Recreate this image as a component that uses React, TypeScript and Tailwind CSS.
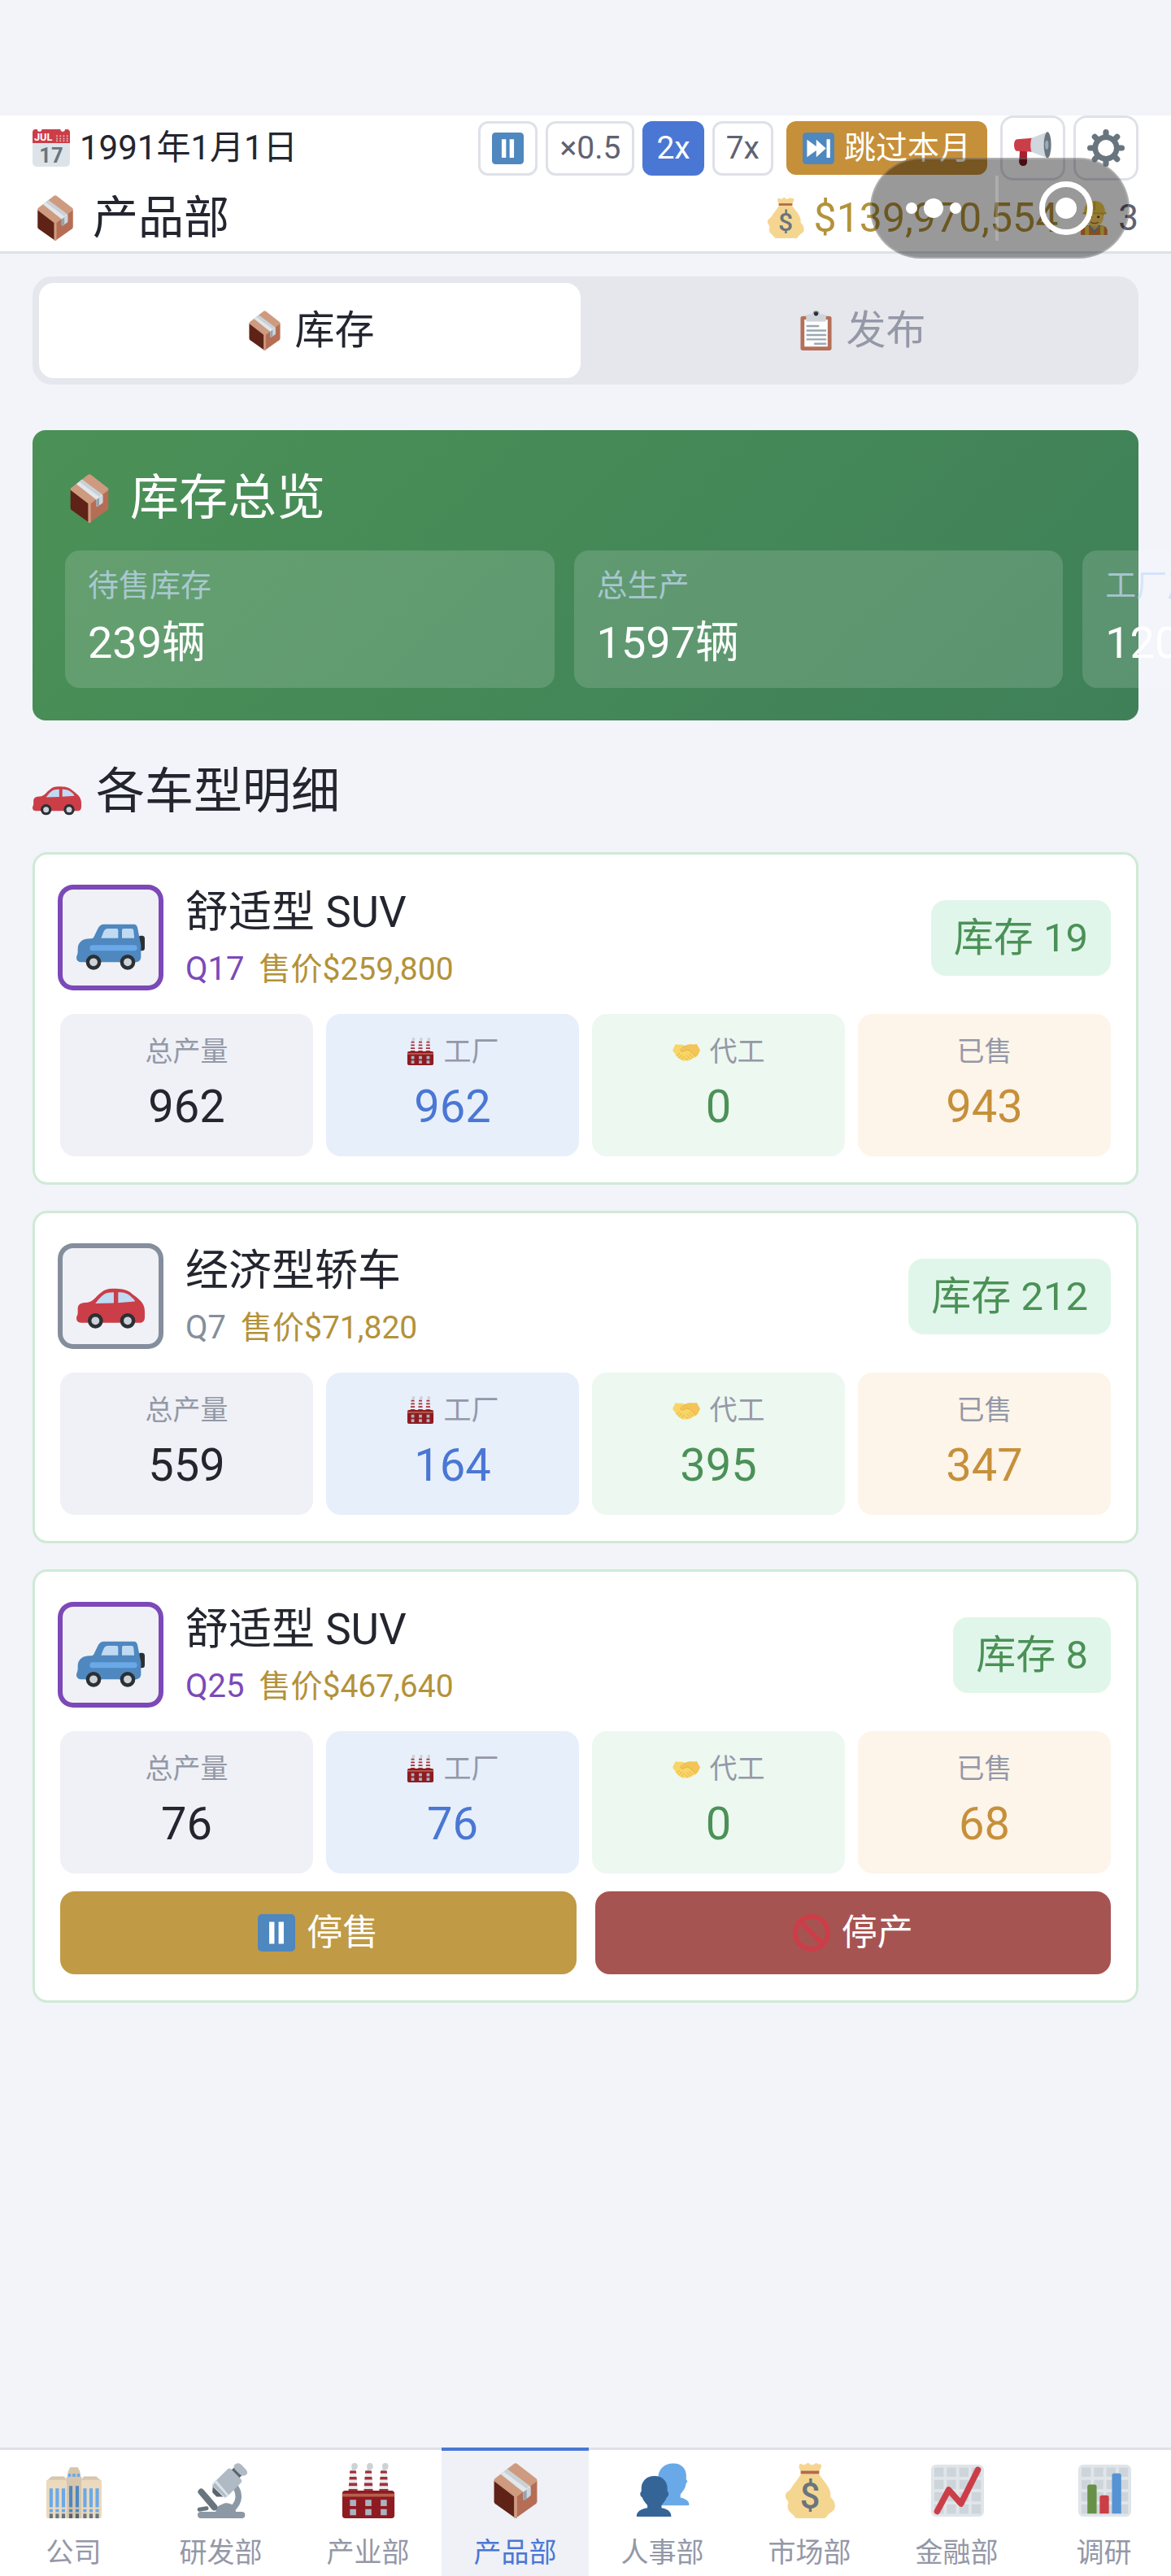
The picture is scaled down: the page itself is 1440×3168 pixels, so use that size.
import React, { useState } from 'react';

interface IconProps {
    className?: string;
}

interface CarModel {
    id: number;
    name: string;
    icon: 'suv' | 'sedan';
    quality: number;
    price: string;
    stock: number;
    total: number;
    factory: number;
    outsourced: number;
    sold: number;
    rare: boolean;
    hasActions?: boolean;
}

function Svg({ className = '', children }: IconProps & { children: React.ReactNode }) {
    return (
        <svg viewBox="0 0 36 36" className={`shrink-0 ${className}`} aria-hidden="true">
            {children}
        </svg>
    );
}

const PackageIcon = ({ className }: IconProps) => (
    <Svg className={className}>
        <path fill="#5E2316" d="M4 11.5L18 21v15L4.8 26.6a2 2 0 0 1-.8-1.6z" />
        <path fill="#B56E55" d="M32 11.5L18 21v15l13.2-9.4a2 2 0 0 0 .8-1.6z" />
        <path fill="#CE9B80" d="M17 .5a1.6 1.6 0 0 1 2 0l12.5 9.7c.7.6.7 1.4 0 2L19 21.8v13.4a1 1 0 0 1-2 0V21.8L4.5 12.2c-.7-.6-.7-1.4 0-2z" />
        <path fill="#E1E7EB" d="M8.3 7.3l4.2-3.3 14.7 11c.5.4.6.8.6 1.3v4.2c0 .6-.3 1-.7 1.3l-3 2.1c-.6.4-1.1.1-1.1-.5v-4.5z" />
        <path fill="#C9D1D7" d="M10.4 5.7l2.1-1.7 14.7 11-2.1 1.7z" />
        <path fill="#97A3AC" d="M23 18.9l4.8-3.2v5c0 .5-.3.9-.7 1.2l-3 2c-.6.4-1.1.1-1.1-.5z" />
        <path fill="#CFD6DB" d="M25.2 17.3l2.6-1.8v5c0 .5-.3.9-.7 1.2l-1.9 1.3z" />
    </Svg>
);

const CalendarIcon = ({ className }: IconProps) => (
    <Svg className={className}>
        <path fill="#DDE4E9" d="M0 10h36v22a4 4 0 0 1-4 4H4a4 4 0 0 1-4-4z" />
        <path fill="#CB3E48" d="M3 0h1.500a2.200 2.200 0 0 0 4.400 0h18a2.200 2.200 0 0 0 4.400 0H33a3 3 0 0 1 3 3v10.300H0V3a3 3 0 0 1 3-3z" />
        <text x="1.5" y="11.3" fontSize="10" fontWeight="700" fontFamily="Roboto, sans-serif" fill="#FFFFFF">JUL</text>
        <text x="18" y="32" textAnchor="middle" fontSize="20" fontWeight="700" fontFamily="Roboto, sans-serif" fill="#69757E">17</text>
        <g fill="#F0B4B8">
            {[23.5, 26.8, 30.1, 33.4].map((x) =>
                [6.5, 9, 11.2].map((y) => <circle key={`${x}-${y}`} cx={x} cy={y} r=".8" />)
            )}
        </g>
    </Svg>
);

const PauseIcon = ({ className }: IconProps) => (
    <Svg className={className}>
        <rect width="36" height="36" rx="4" fill="#4F87BF" />
        <path fill="#fff" d="M11 7.500h5v21h-5zM20 7.500h5v21h-5z" />
    </Svg>
);

const SkipIcon = ({ className }: IconProps) => (
    <Svg className={className}>
        <rect width="36" height="36" rx="4" fill="#4F87BF" />
        <path fill="#fff" d="M5 8l10.500 7.800V8L26.500 18 15.500 28v-7.800L5 28zM27.200 7.500h4v21h-4z" />
    </Svg>
);

const MegaphoneIcon = ({ className }: IconProps) => (
    <Svg className={className}>
        <path fill="#A81F30" d="M5.500 20h7v11.500a3.300 3.300 0 0 1-7.500 0z" />
        <path fill="#7B1624" d="M5.200 27.500h7.200v4a3.600 3.600 0 0 1-7.400 0z" />
        <path fill="#CB3E48" d="M17.500 8.500L3 9.500C1 9.700 0 12 0 15s1 5.800 3 6l14.500.8z" />
        <path fill="#CFD6DC" d="M17 8.500L32 2.500v25L17 21.900c-1.500-3-1.500-10.400 0-13.400z" />
        <ellipse cx="32.2" cy="15" rx="3.5" ry="12.5" fill="#69757E" />
        <ellipse cx="31.5" cy="15" rx="1.7" ry="4.5" fill="#9BAAB4" />
    </Svg>
);

const GearIcon = ({ className }: IconProps) => (
    <Svg className={className}>
        <g stroke="#69757E" strokeWidth="5.6" strokeLinecap="round">
            {[0, 45, 90, 135, 180, 225, 270, 315].map((angle) => (
                <line key={angle} x1="18" y1="6" x2="18" y2="2.8" transform={`rotate(${angle} 18 18)`} />
            ))}
        </g>
        <circle cx="18" cy="18" r="10.4" fill="none" stroke="#69757E" strokeWidth="5.2" />
    </Svg>
);

const MoneyBagIcon = ({ className }: IconProps) => (
    <Svg className={className}>
        <path fill="#F5D691" d="M12 5.500C11 4 10.500 1.800 11.300.8c.9-1 2 .6 3 .4 1.200-.3 1.500-1.200 2.500-1.200s1.300 1.300 2.500 1.300S21 .1 22.300.1c1 0 1.200 1 2 .7.900-.3 1.400.6 1 1.900-.3 1-.8 1.900-1.300 2.800v2c3 4 6.500 8 7.300 11.500.4 1.500-.4 2.500.4 3.500 1.500 1.500 2.800 3.500 2.600 6-.2 3-2.800 3.500-4.300 5-1 1-1.300 2.500-3 2.500H10c-2 0-2-1.500-3.500-2.700-1.500-1.300-3-2.500-3-5 0-1.500.7-2.300.2-3.300C3 24 2 23 2 21.500c0-2.500 2.500-3 3.500-4.500 1.500-3 4.500-6 6.500-9.500z" />
        <path fill="#B5694F" d="M12 5.100h12v2H12z" />
        <text x="18" y="29.5" textAnchor="middle" fontSize="23" fontWeight="500" fontFamily="Roboto, sans-serif" fill="#69757E">$</text>
    </Svg>
);

const WorkerIcon = ({ className }: IconProps) => (
    <Svg className={className}>
        <path fill="#E2803A" d="M3.500 36v-4c0-4 3-6 7-6h14c4 0 7 2 7 6v4z" />
        <path fill="#F3D24B" d="M8 26.500h4V36H8zM24 26.500h4V36h-4z" />
        <path fill="#5A9BD0" d="M12 26l6 8 6-8-3-2h-6z" />
        <path fill="#F1B95B" d="M14 22h8v5l-4 4-4-4z" />
        <path fill="#F8D363" d="M8.500 10h19v7c0 6-4.500 10-9.500 10s-9.500-4-9.500-10z" />
        <path fill="#E39A3C" d="M8.500 11h19v5l-2.500-3H11l-2.500 3z" />
        <circle cx="14" cy="17" r="1.3" fill="#5E3A1A" />
        <circle cx="22" cy="17" r="1.3" fill="#5E3A1A" />
        <path d="M14 22.500c2.500 1.500 5.500 1.500 8 0" fill="none" stroke="#B5552E" strokeWidth="1.2" />
        <path fill="#F2CE46" d="M7 11.500C7 4 12 0 18 0s11 4 11 11.500l1.500 1V14h-25v-1.500z" />
        <path fill="#D9AE2E" d="M17 1h2v9h-2zM6 12.500h24V14H6z" />
    </Svg>
);

const ClipboardIcon = ({ className }: IconProps) => (
    <Svg className={className}>
        <rect x="4" y="5" width="28" height="31" rx="2" fill="#B5705A" />
        <path fill="#fff" d="M7.500 8h21v24.500h-21z" />
        <circle cx="18" cy="3" r="3" fill="#9AA6AF" />
        <path fill="#CFD5DA" d="M9 5.500c0-1 .5-1.500 1.500-2L15 3h6l4.500.5c1 .5 1.500 1 1.500 2V10H9z" />
        <circle cx="18" cy="2.8" r="1.9" fill="#2A3034" />
        <path stroke="#9AA8B2" strokeWidth="1.8" strokeLinecap="round" d="M10 14h10M10 18h16.500M10 22h16.500M10 26h16.500M17 30h9.500" />
    </Svg>
);

const SedanIcon = ({ className }: IconProps) => (
    <Svg className={className}>
        <path fill="#CB3E48" d="M0 29.500c0-1 .7-1.300.7-2.500v-2.500c0-1.800 1.300-2.800 3-3 2-.2 3.500-.2 5-1.500 3.500-3 5-6 10.300-6 4.500 0 7.500.3 10 2.500 3 2.500 7 4.500 7 9.500v3c0 2-1 3-2.500 3h-31C.8 32 0 31 0 29.500z" />
        <path fill="#BFDAF2" d="M10 21.900c2-2.500 4-5.400 7-5.700l2.700-.2v5.600zM22 16c3 0 5 .5 7 2.500 1 1 1.800 1.500 1.800 2.300L22 21.500z" />
        <g fill="#2A3034">
            <circle cx="10" cy="31" r="4" />
            <circle cx="27" cy="31" r="4" />
        </g>
        <g fill="#CCD2D8">
            <circle cx="10" cy="31" r="2.1" />
            <circle cx="27" cy="31" r="2.1" />
        </g>
    </Svg>
);

const SuvIcon = ({ className }: IconProps) => (
    <Svg className={className}>
        <rect x="32.5" y="17" width="3.5" height="8" rx="1.5" fill="#2A3034" />
        <path fill="#4F87BF" d="M0 28.500c0-1 .7-1.500.7-3V24c0-4 3-5.500 6.300-5.500 1.500 0 2-.2 2.500-1.500l1.700-3.500c.7-1.700 1.800-2.500 3.300-2.500H30c1.500 0 2 .8 2.200 2L34 22v6c0 2-1 3-3 3H3c-2 0-3-.8-3-2.500z" />
        <rect x="7" y="22" width="25" height="3" rx="1.5" fill="#6AA9E8" />
        <path fill="#BFDAF2" d="M13 18.300l1.300-3.300c.5-1.200 1.200-1.700 2.200-1.700H21c.7 0 1 .3 1 1v4zM25 13.300h4c.6 0 1 .3 1.100 1l.4 4H24v-4c0-.7.3-1 1-1z" />
        <g fill="#2A3034">
            <circle cx="9" cy="31" r="4" />
            <circle cx="27" cy="31" r="4" />
        </g>
        <g fill="#CCD2D8">
            <circle cx="9" cy="31" r="2.1" />
            <circle cx="27" cy="31" r="2.1" />
        </g>
    </Svg>
);

const FactoryIcon = ({ className }: IconProps) => (
    <Svg className={className}>
        {[8, 18, 28].map((x) => (
            <g key={x}>
                <ellipse cx={x + 1} cy="2.2" rx="2" ry="2.2" fill="#CDD2D5" />
                <path fill="#CDD2D5" d={`M${x - 1} 5l.5-2h2l-.5 2z`} />
                <path fill="#E9EBED" d={`M${x - 2} 5h4l1 13h-6z`} />
                <path fill="#A3303A" d={`M${x - 2} 5h4l.2 1.800h-4.400zM${x - 2.3} 9h4.600l.2 1.900h-5zM${x - 2.6} 13h5.200l.2 1.900h-5.600zM${x - 2.9} 17h5.800v1.500h-5.800z`} />
            </g>
        ))}
        <rect x="1" y="18" width="34" height="18" rx="2" fill="#8F1B22" />
        <path fill="#B5614F" d="M1 20h34v2H1z" />
        {[6, 16, 26].map((x) => (
            <path key={x} fill="#A9B4C0" d={`M${x} 24h4v4h-4zM${x} 30h4v4h-4z`} />
        ))}
    </Svg>
);

const HandshakeIcon = ({ className }: IconProps) => (
    <Svg className={className}>
        <path fill="#F3C456" d="M36 16.500L31.500 8.500c-3 .8-6 .2-9 .2-3 0-5 1-7 3L9 17c-1 1.500 1 3 3 2.500l5-1.500 12 8c3-1.500 4.500-4 5.500-6.500z" />
        <path fill="#F8D565" d="M.3 16L4 8.500c3 1.500 6 .5 9 1 1.500.2 3 .7 3.500 1.500L11 14.500c-1.500 1.500 0 4 2.500 3.500 2-.5 3.500-2 5.500-2 3 0 8 5.500 10 8 1 1.800-1 3.300-2.500 2 .5 2-1.500 3-3 2-.2 1.800-2.300 2.300-3.500 1.300-.8 1.500-2.800 1.500-3.800.3C14 31 12 30 11.500 28.500c-2 .5-3-.5-3-2-1.800 0-3-1-2.800-2.700-1.500 0-2.500-1-2-2.800C2 20 .5 18 .3 16z" />
        <path fill="none" stroke="#DDA643" strokeWidth=".8" strokeLinecap="round" d="M17 11l-6 3.500c-1.500 1.500 0 4 2.500 3.500 2-.5 3.500-2 5.500-2 3 0 8 5 10 8M5.700 23.800L9 20.500M8.500 26.500l3.500-4M11.500 28.500l3.500-4M20 29.300l-3-3M23.500 28L19 23.500M26.500 26L22 21.500" />
    </Svg>
);

const ForbiddenIcon = ({ className }: IconProps) => (
    <Svg className={className}>
        <circle cx="18" cy="18" r="15.7" fill="none" stroke="#CB3E48" strokeWidth="4.6" />
        <path stroke="#CB3E48" strokeWidth="4.6" d="M7 7l22 22" />
    </Svg>
);

const BuildingIcon = ({ className }: IconProps) => (
    <Svg className={className}>
        <path fill="#D6C6AE" d="M15.500 2.800h5l1.500 3V10h-8V5.800zM3.500 8.800h8l2.500 3H0zM24.500 8.800h8l3.500 3H22z" />
        <path fill="#EBDABD" d="M0 12c0-.7.5-1 1-1h12v25H1.500C.5 36 0 35.500 0 34.500zM36 12c0-.7-.5-1-1-1H23v25h11.500c1 0 1.500-.5 1.500-1.500z" />
        <path fill="#D6C6AE" d="M13 9h10v27H13z" />
        <path fill="#6AA9E8" d="M14 7h2v2h-2zM17 7h2v2h-2zM20 7h2v2h-2z" />
        {[2, 6, 10, 24, 28, 32].map((x) => (
            <g key={x}>
                <path fill="#6AA9E8" d={`M${x} 16.500h2.200v12.300H${x}zM${x} 30h2.200v2H${x}z`} />
                <path fill="#69757E" d={`M${x} 33h2.200v3H${x}z`} />
            </g>
        ))}
        {[14.8, 19].map((x) => (
            <g key={x}>
                <path fill="#4F87BF" d={`M${x} 15h2.200v13.800H${x}zM${x} 30h2.200v2H${x}z`} />
                <path fill="#59646C" d={`M${x} 33h2.200v3H${x}z`} />
            </g>
        ))}
    </Svg>
);

const MicroscopeIcon = ({ className }: IconProps) => (
    <Svg className={className}>
        <path fill="none" stroke="#8C99A5" strokeWidth="4" d="M26 14c4.500 5 4.500 11.500-1 16" />
        <path fill="#8C99A5" d="M14.500 32c0-3 2-4.500 4-5 2-1.500 5-1 7 .5 1.500 1 2 2.500 2 4.500z" />
        <rect x="2.7" y="31.8" width="30.8" height="4.2" rx="2" fill="#8C99A5" />
        <path stroke="#69757E" strokeWidth="4.2" strokeLinecap="round" d="M5 18.800l8.500 10" />
        <path stroke="#69757E" strokeWidth="2.6" strokeLinecap="round" d="M3.800 30.300l4.700-.8" />
        <path fill="#59646C" d="M23.500 5.500l3.500-3 5 5-3.500 3.500zM12.500 15.500L20 22h-5l-2.700-2.800z" />
        <path fill="#AFBAC4" d="M22 4.300c.8-1 1.800-1 2.600-.2l6.200 6.400c.7.8.7 1.700 0 2.500l-9 9c-.8.6-1.700.6-2.500 0l-6.600-6.200c-.7-.8-.7-1.700 0-2.500z" />
        <path fill="#DCE3E8" d="M14.700 11l8.200 9.800-1.200 1.200c-.8.6-1.700.6-2.500 0L12.700 15c-.6-.8-.5-1.700.2-2.400z" />
        <path fill="#AFBAC4" d="M14 12.800l7.500 8.700-1 .8-7.900-7.500z" />
        <path fill="#AFBAC4" d="M26.500 1.500c1.500-2 3.500-1.700 5 0l2.500 2.700c1.500 1.500 1.300 3-.3 3.800-1.500.7-2.700.3-4-1l-2.700-2.700c-.8-.9-1-1.900-.5-2.800z" />
    </Svg>
);

const PeopleIcon = ({ className }: IconProps) => (
    <Svg className={className}>
        <path fill="#6AA9E8" d="M25 .3c5 0 8.300 3.300 8.300 8l-.1 2.200.9 1.500-1 1.500c-.3 3-2 5-3.600 7v2c3 .8 5.500 2 5.700 4.400 0 .5-.3.700-.7.700H15V10c0-6 4-9.700 10-9.700z" />
        <path fill="#356597" d="M12.600 8.500c5 0 8.400 3.300 8.400 8v2c1.500 1 .7 3.500-.5 4-.7 2-2 3.500-3.300 5v1.800c3.700.5 6.300 2.500 6.300 5.200 0 .3-.3.500-.8.500H1.800c-.5 0-.8-.2-.8-.5 0-2.700 3-4.700 7-5.200v-1.800c-1.300-1.500-2.700-3-3.300-5-1.300-.5-2-3-.6-4v-2c0-4.700 3.500-8 8.500-8z" />
    </Svg>
);

const ChartFrame = ({ className, children }: IconProps & { children: React.ReactNode }) => (
    <Svg className={className}>
        <rect x="1" y="1" width="34.5" height="34" rx="3.5" fill="#DFE5E9" />
        <g fill="#CDD4DA">
            {[3.2, 11.3, 19.4, 27.5].map((x) =>
                [3, 11, 19, 27].map((y) => <rect key={`${x}-${y}`} x={x} y={y} width="6" height="6" />)
            )}
        </g>
        {children}
    </Svg>
);

const TrendIcon = ({ className }: IconProps) => (
    <ChartFrame className={className}>
        <path fill="none" stroke="#CB3E48" strokeWidth="4" strokeLinecap="round" strokeLinejoin="round" d="M5 31.500l7.500-14L20.500 26.500 31.500 4.500" />
    </ChartFrame>
);

const BarsIcon = ({ className }: IconProps) => (
    <ChartFrame className={className}>
        <path fill="#669147" d="M7 33V15.500a1.500 1.500 0 0 1 1.500-1.500h3a1.500 1.500 0 0 1 1.500 1.500V33z" />
        <path fill="#CB3E48" d="M15 33V22.500a1.500 1.500 0 0 1 1.500-1.500h3a1.500 1.500 0 0 1 1.500 1.500V33z" />
        <path fill="#5693D4" d="M23 33V8.300a1.500 1.500 0 0 1 1.500-1.500h3A1.500 1.500 0 0 1 29 8.300V33z" />
    </ChartFrame>
);

const models: CarModel[] = [
    { id: 1, name: '舒适型 SUV', icon: 'suv', quality: 17, price: '$259,800', stock: 19, total: 962, factory: 962, outsourced: 0, sold: 943, rare: true },
    { id: 2, name: '经济型轿车', icon: 'sedan', quality: 7, price: '$71,820', stock: 212, total: 559, factory: 164, outsourced: 395, sold: 347, rare: false },
    { id: 3, name: '舒适型 SUV', icon: 'suv', quality: 25, price: '$467,640', stock: 8, total: 76, factory: 76, outsourced: 0, sold: 68, rare: true, hasActions: true },
];

const overview = [
    { label: '待售库存', value: '239辆' },
    { label: '总生产', value: '1597辆' },
    { label: '工厂产量', value: '1202辆' },
];

const departments = [
    { label: '公司', Icon: BuildingIcon },
    { label: '研发部', Icon: MicroscopeIcon },
    { label: '产业部', Icon: FactoryIcon },
    { label: '产品部', Icon: PackageIcon },
    { label: '人事部', Icon: PeopleIcon },
    { label: '市场部', Icon: MoneyBagIcon },
    { label: '金融部', Icon: TrendIcon },
    { label: '调研', Icon: BarsIcon },
];

const speeds = ['×0.5', '2x', '7x'];

function Header() {
    const [speed, setSpeed] = useState('2x');

    return (
        <header className="relative bg-white border-b-3 border-[#DDE1E7] px-10 pb-[13px]">
            <div className="flex items-center justify-between h-20">
                <div className="flex items-center gap-3 text-[42px] leading-none text-[#23252F]">
                    <CalendarIcon className="size-[46px]" />
                    <span>1991年1月1日</span>
                </div>
                <div className="flex items-center gap-4 text-[39px] leading-none">
                    <div className="flex items-center gap-[10px]">
                        <button aria-label="暂停" className="h-[67px] px-[14px] border-3 border-[#DFE1E9] rounded-xl">
                            <PauseIcon className="size-[39px]" />
                        </button>
                        {speeds.map((s) => (
                            <button
                                key={s}
                                onClick={() => setSpeed(s)}
                                className={`h-[67px] px-[14px] border-3 rounded-xl ${s === speed ? 'bg-[#4A77D4] border-[#4A77D4] text-white' : 'border-[#DFE1E9] text-[#5F6273]'
                                    }`}
                            >
                                {s}
                            </button>
                        ))}
                    </div>
                    <button className="flex items-center gap-3 h-[66px] px-5 rounded-xl bg-[#C6903A] text-white">
                        <SkipIcon className="size-[39px]" />
                        跳过本月
                    </button>
                    <div className="flex items-center gap-[10px]">
                        <button aria-label="公告" className="grid place-items-center size-20 border-3 border-[#DFE1E9] rounded-2xl">
                            <MegaphoneIcon className="size-[46px]" />
                        </button>
                        <button aria-label="设置" className="grid place-items-center size-20 border-3 border-[#DFE1E9] rounded-2xl">
                            <GearIcon className="size-[46px]" />
                        </button>
                    </div>
                </div>
            </div>
            <div className="flex items-center justify-between mt-[18px]">
                <h1 className="flex items-center gap-[18px] text-[56px] leading-none text-[#23252F]">
                    <PackageIcon className="size-14" />
                    产品部
                </h1>
                <div className="flex items-center gap-6 leading-none">
                    <span className="flex items-center gap-[10px] text-[50px] text-[#B3923A]">
                        <MoneyBagIcon className="size-[50px]" />
                        $139,970,554
                    </span>
                    <span className="flex items-center gap-2 text-[44px] text-[#5F6273]">
                        <WorkerIcon className="size-[42px]" />
                        3
                    </span>
                </div>
            </div>

            {/* mini program capsule floats above the header */}
            <div className="absolute top-[52px] right-[51px] flex items-center w-[319px] h-[124px] rounded-full border-2 border-white/20 bg-black/40">
                <button aria-label="更多" className="flex flex-1 items-center justify-center gap-2 h-full">
                    <span className="size-[14px] rounded-full bg-white" />
                    <span className="size-6 rounded-full bg-white" />
                    <span className="size-[14px] rounded-full bg-white" />
                </button>
                <span className="w-1 h-20 bg-white/20" />
                <button aria-label="关闭" className="grid flex-1 place-items-center h-full pl-2">
                    <span className="grid place-items-center size-[66px] rounded-full border-[7px] border-white">
                        <span className="size-[26px] rounded-full bg-white" />
                    </span>
                </button>
            </div>
        </header>
    );
}

function Overview() {
    return (
        <section className="mt-14 px-10 pt-[54px] pb-10 rounded-2xl bg-linear-[135deg,#4B9156,#3F8059]">
            <h2 className="flex items-center gap-5 text-[60px] leading-none text-white">
                <PackageIcon className="size-[60px]" />
                库存总览
            </h2>
            <div className="flex gap-6 mt-[34px]">
                {overview.map((item) => (
                    <div key={item.label} className="shrink-0 basis-[47%] h-[169px] px-7 pt-[22px] rounded-[18px] bg-white/15 whitespace-nowrap">
                        <div className="text-[38px] leading-[42px] text-[#C8DCFA]/70">{item.label}</div>
                        <div className="mt-5 text-[54px] leading-[60px] text-white">{item.value}</div>
                    </div>
                ))}
            </div>
        </section>
    );
}

interface StatProps {
    label: string;
    value: number;
    className: string;
    valueClassName: string;
    icon?: React.ReactNode;
}

function Stat({ label, value, className, valueClassName, icon }: StatProps) {
    return (
        <div className={`flex flex-col items-center gap-5 h-[175px] pt-7 rounded-[18px] ${className}`}>
            <div className="flex items-center gap-3 text-[34px] leading-9 text-[#9498A7]">
                {icon}
                {label}
            </div>
            <div className={`text-[56px] leading-[60px] ${valueClassName}`}>{value}</div>
        </div>
    );
}

function ModelCard({ model }: { model: CarModel }) {
    const CarIcon = model.icon === 'suv' ? SuvIcon : SedanIcon;

    return (
        <article className="px-[31px] py-8 rounded-[18px] border-3 border-[#CFEAD6] bg-white">
            <div className="flex items-center justify-between h-[140px] mb-6">
                <div className="flex items-center gap-[30px]">
                    <div
                        className={`grid place-items-center size-[124px] rounded-2xl border-3 ring-3 bg-[#EFF1F6] ${model.rare ? 'border-[#7C49B8] ring-[#7C49B8]' : 'border-[#858E9C] ring-[#858E9C]'
                            }`}
                    >
                        <CarIcon className="size-[84px]" />
                    </div>
                    <div className="flex flex-col gap-[18px]">
                        <h3 className="text-[53px] leading-[60px] text-[#23252F]">{model.name}</h3>
                        <div className="flex items-center gap-[18px] leading-[44px]">
                            <span className={`text-[40px] ${model.rare ? 'text-[#7C49B8]' : 'text-[#858E9C]'}`}>Q{model.quality}</span>
                            <span className="text-[39px] text-[#B3923A]">售价{model.price}</span>
                        </div>
                    </div>
                </div>
                <span className="px-7 rounded-[18px] bg-[#E1F6EA] text-[49px] leading-[93px] text-[#4B9157]">
                    库存 {model.stock}
                </span>
            </div>

            <div className="grid grid-cols-4 gap-4">
                <Stat label="总产量" value={model.total} className="bg-[#EFF1F6]" valueClassName="text-[#23252F]" />
                <Stat
                    label="工厂"
                    value={model.factory}
                    className="bg-[#E7EFFB]"
                    valueClassName="text-[#4A77D4]"
                    icon={<FactoryIcon className="size-[34px]" />}
                />
                <Stat
                    label="代工"
                    value={model.outsourced}
                    className="bg-[#ECF8F0]"
                    valueClassName="text-[#4B9157]"
                    icon={<HandshakeIcon className="size-[34px]" />}
                />
                <Stat label="已售" value={model.sold} className="bg-[#FDF4EA]" valueClassName="text-[#C6903A]" />
            </div>

            {model.hasActions && (
                <div className="grid grid-cols-2 gap-[23px] mt-[22px] text-[44px] leading-none text-white">
                    <button className="flex items-center justify-center gap-[14px] h-[102px] rounded-[18px] bg-[#C09A45]">
                        <PauseIcon className="size-[46px]" />
                        停售
                    </button>
                    <button className="flex items-center justify-center gap-[14px] h-[102px] rounded-[18px] bg-[#A65452]">
                        <ForbiddenIcon className="size-[46px]" />
                        停产
                    </button>
                </div>
            )}
        </article>
    );
}

export default function App() {
    const [tab, setTab] = useState('库存');
    const tabs = [
        { label: '库存', Icon: PackageIcon },
        { label: '发布', Icon: ClipboardIcon },
    ];

    return (
        <div className="flex flex-col min-h-screen pt-[142px] overflow-hidden bg-[#F2F4F9] font-['Roboto','Noto_Sans_CJK_SC',sans-serif]">
            <Header />

            <main className="flex-1 px-10 pt-7">
                <div role="tablist" className="grid grid-cols-2 gap-3 p-2 rounded-3xl bg-[#E6E7EC]">
                    {tabs.map(({ label, Icon }) => (
                        <button
                            key={label}
                            role="tab"
                            aria-selected={tab === label}
                            onClick={() => setTab(label)}
                            className={`flex items-center justify-center gap-3 h-[117px] rounded-[18px] text-[49px] leading-none ${tab === label ? 'bg-white text-[#23252F]' : 'text-[#9498A7]'
                                }`}
                        >
                            <Icon className="size-[49px]" />
                            {label}
                        </button>
                    ))}
                </div>

                <Overview />

                <h2 className="flex items-center gap-[18px] mt-[58px] mb-[44px] text-[60px] leading-none text-[#23252F]">
                    <SedanIcon className="size-[60px]" />
                    各车型明细
                </h2>
                <div className="flex flex-col gap-8">
                    {models.map((model) => (
                        <ModelCard key={model.id} model={model} />
                    ))}
                </div>
            </main>

            <nav className="flex h-[158px] border-t-3 border-[#DDE1E7] bg-white">
                {departments.map(({ label, Icon }) => {
                    const active = label === '产品部';
                    return (
                        <a
                            key={label}
                            href="#"
                            className={`flex flex-col flex-none items-center w-[181px] -mt-[3px] pt-[15px] text-[34px] leading-9 ${active ? 'border-t-4 border-[#4A77D4] bg-[#EFF1F6] text-[#4A77D4]' : 'border-t-4 border-transparent text-[#9498A7]'
                                }`}
                        >
                            <Icon className="size-[68px]" />
                            <span className="mt-6">{label}</span>
                        </a>
                    );
                })}
            </nav>
        </div>
    );
}
